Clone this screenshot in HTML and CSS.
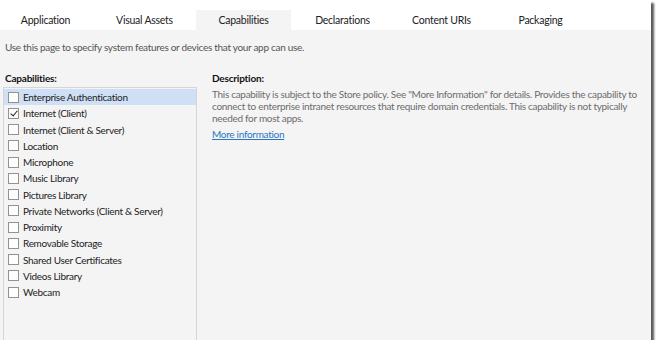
FILE: index.html
```html
<!DOCTYPE html>
<html lang="en">
<head>
  <meta charset="UTF-8">
  <title>Package.appxmanifest - Capabilities</title>
  <link rel="stylesheet" href="styles.css">
</head>
<body>
  <div class="window">
    <nav class="tabs">
      <div class="tab">Application</div>
      <div class="tab">Visual Assets</div>
      <div class="tab active">Capabilities</div>
      <div class="tab">Declarations</div>
      <div class="tab">Content URIs</div>
      <div class="tab">Packaging</div>
    </nav>

    <div class="page">
      <p class="intro">Use this page to specify system features or devices that your app can use.</p>

      <div class="columns">
        <section class="caps">
          <h2 class="heading">Capabilities:</h2>
          <ul class="cap-list">
            <li class="cap selected"><span class="box"></span>Enterprise Authentication</li>
            <li class="cap"><span class="box checked"></span>Internet (Client)</li>
            <li class="cap"><span class="box"></span>Internet (Client &amp; Server)</li>
            <li class="cap"><span class="box"></span>Location</li>
            <li class="cap"><span class="box"></span>Microphone</li>
            <li class="cap"><span class="box"></span>Music Library</li>
            <li class="cap"><span class="box"></span>Pictures Library</li>
            <li class="cap"><span class="box"></span>Private Networks (Client &amp; Server)</li>
            <li class="cap"><span class="box"></span>Proximity</li>
            <li class="cap"><span class="box"></span>Removable Storage</li>
            <li class="cap"><span class="box"></span>Shared User Certificates</li>
            <li class="cap"><span class="box"></span>Videos Library</li>
            <li class="cap"><span class="box"></span>Webcam</li>
          </ul>
        </section>

        <section class="desc">
          <h2 class="heading">Description:</h2>
          <p class="desc-text">This capability is subject to the Store policy. See "More Information" for details. Provides the capability to connect to enterprise intranet resources that require domain credentials. This capability is not typically needed for most apps.</p>
          <a class="more" href="#">More information</a>
        </section>
      </div>
    </div>
  </div>
</body>
</html>
```

FILE: styles.css
```css
:root {
  --color-bg: #f4f4f4;
  --color-tabs: #ffffff;
  --color-border: #d6d6d6;
  --color-text: #1e1e1e;
  --color-muted: #6d6d6d;
  --color-link: #2a76c6;
  --color-select: #cfe0f6;
}

* {
  margin: 0;
  padding: 0;
  box-sizing: border-box;
}

body {
  background: #ffffff;
  font-family: Lato, "Open Sans", sans-serif;
  font-size: 10px;
  letter-spacing: -.3px;
  color: var(--color-text);
}

.window {
  width: 651px;
  height: 340px;
  background: var(--color-bg);
  box-shadow: 3px 3px 2px rgba(0,0,0,.65);
  display: flex;
  flex-direction: column;
  overflow: hidden;
}

.tabs {
  display: flex;
  gap: 4px;
  height: 30px;
  padding-top: 10px;
  margin-left: -2px;
  background: var(--color-tabs);
}

.tab {
  width: 95px;
  text-align: center;
  line-height: 21px;
  font-size: 10.5px;
  letter-spacing: -.25px;
  color: #222;
}

.tab.active {
  background: var(--color-bg);
}

.page {
  flex: 1;
  display: flex;
  flex-direction: column;
}

.intro {
  padding: 11px 0 0 5px;
  height: 42px;
  color: #555;
}

.columns {
  flex: 1;
  display: flex;
}

.heading {
  font-size: 10px;
  font-weight: 700;
  letter-spacing: -.2px;
  color: #111;
  line-height: 13px;
  height: 15px;
}

.caps {
  width: 197px;
  padding-left: 3px;
  display: flex;
  flex-direction: column;
}

.caps .heading {
  padding-left: 2px;
}

.cap-list {
  flex: 1;
  list-style: none;
  border: 1px solid var(--color-border);
  border-bottom: none;
  padding-top: 1px;
}

.cap {
  display: flex;
  align-items: center;
  gap: 4px;
  height: 16.25px;
  padding-left: 4px;
  color: #222;
}

.cap.selected {
  background: var(--color-select);
}

.box {
  width: 11px;
  height: 11px;
  border: 1px solid #929292;
  background: #fdfdfd;
  position: relative;
  flex-shrink: 0;
}

.box.checked::after {
  content: "";
  position: absolute;
  left: 3px;
  top: 0;
  width: 3px;
  height: 6px;
  border: solid #222;
  border-width: 0 1.5px 1.5px 0;
  transform: rotate(40deg);
}

.desc {
  flex: 1;
  padding: 0 14px 0 15px;
}

.desc-text {
  color: var(--color-muted);
  line-height: 12px;
  margin: 1px 0 4px;
}

.more {
  color: var(--color-link);
  text-decoration: underline;
}
```
